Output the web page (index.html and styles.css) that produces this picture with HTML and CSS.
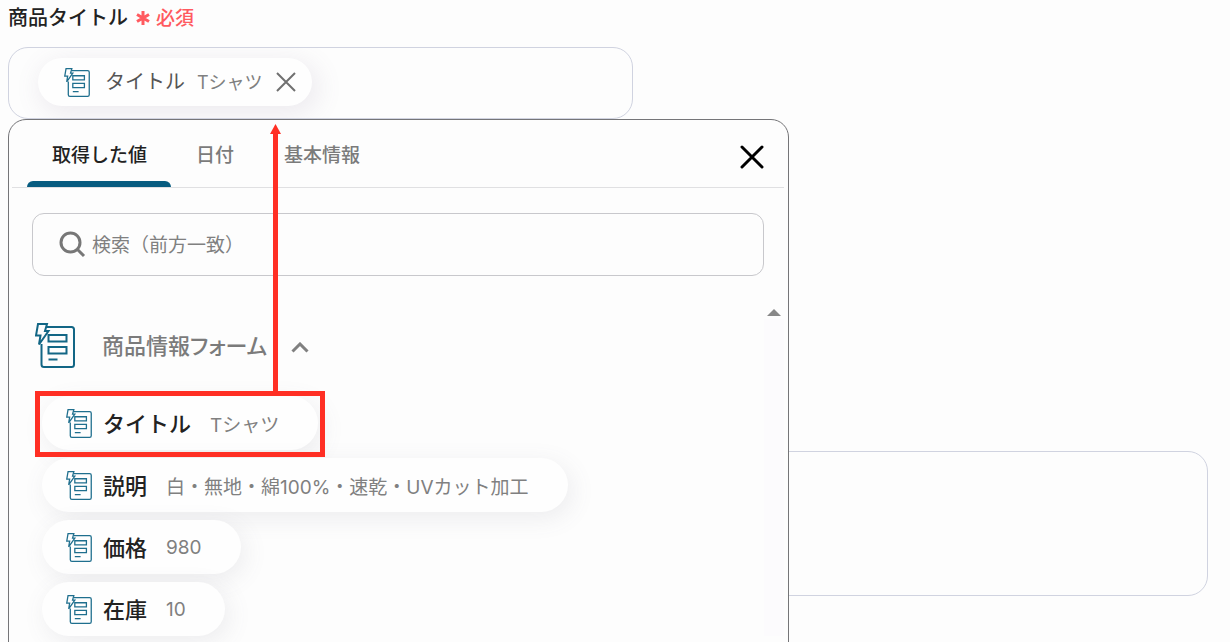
FILE: index.html
```html
<!DOCTYPE html>
<html lang="ja">
<head>
<meta charset="utf-8">
<meta name="viewport" content="width=device-width, initial-scale=1">
<title>商品タイトル</title>
<link rel="stylesheet" href="styles.css">
</head>
<body>
<svg class="defs" aria-hidden="true">
  <symbol id="form-icon" viewBox="0 0 40 45">
    <path d="M12 4H36.500Q39 4 39 6.500V41.500Q39 44 36.500 44H9Q6.500 44 6.500 41.500V21M13.500 12H31.500V18.500H13.500ZM13.500 24H31.500V30.500H13.500ZM13.500 36.500H22.500"/>
    <path d="M3 1H12L10 8H13.500L4 21.500L5.500 12.500H1Z"/>
  </symbol>
</svg>
<main class="page">
  <label class="label" for="title-field">商品タイトル <span class="required"><svg class="star" viewBox="0 0 14 14" aria-hidden="true"><path d="M7 0V14M1 3.500L13 10.500M1 10.500L13 3.500"/></svg>必須</span></label>
  <div class="field-area">
    <div class="field">
      <span class="token">
        <svg class="form-icon" aria-hidden="true"><use href="#form-icon"/></svg>
        <span class="token-name">タイトル</span>
        <span class="token-value">Tシャツ</span>
        <button class="token-remove" type="button" aria-label="削除"><svg viewBox="0 0 20 20"><path d="M1 1L19 19M19 1L1 19"/></svg></button>
      </span>
      <input class="field-input" id="title-field" type="text">
    </div>
    <section class="picker" aria-label="値の選択">
      <header class="picker-head">
        <nav class="tabs">
          <button class="tab tab-active" type="button">取得した値</button>
          <button class="tab" type="button">日付</button>
          <button class="tab" type="button">基本情報</button>
        </nav>
        <button class="close" type="button" aria-label="閉じる"><svg viewBox="0 0 24 24"><path d="M2 2L22 22M22 2L2 22"/></svg></button>
      </header>
      <div class="search">
        <svg class="search-icon" viewBox="0 0 27 27" aria-hidden="true"><circle cx="11.500" cy="11.500" r="9.500"/><path d="M18.500 18.500L25 25"/></svg>
        <input class="search-input" type="search" aria-label="検索" placeholder="検索（前方一致）">
      </div>
      <div class="results">
        <div class="results-main">
          <button class="group" type="button">
            <svg class="group-icon" aria-hidden="true"><use href="#form-icon"/></svg>
            <span>商品情報フォーム</span>
            <svg class="chevron" viewBox="0 0 18 11" aria-hidden="true"><path d="M1.500 9.500L9 2L16.500 9.500"/></svg>
          </button>
          <div class="chips">
            <button class="chip" type="button"><svg class="form-icon" aria-hidden="true"><use href="#form-icon"/></svg><span class="chip-name">タイトル</span><span class="chip-value">Tシャツ</span></button>
            <button class="chip" type="button"><svg class="form-icon" aria-hidden="true"><use href="#form-icon"/></svg><span class="chip-name">説明</span><span class="chip-value">白・無地・綿100%・速乾・UVカット加工</span></button>
            <button class="chip" type="button"><svg class="form-icon" aria-hidden="true"><use href="#form-icon"/></svg><span class="chip-name">価格</span><span class="chip-value">980</span></button>
            <button class="chip" type="button"><svg class="form-icon" aria-hidden="true"><use href="#form-icon"/></svg><span class="chip-name">在庫</span><span class="chip-value">10</span></button>
          </div>
        </div>
        <div class="scroll"><svg class="scroll-up" viewBox="0 0 14 7" aria-hidden="true"><path d="M0 7L7 0L14 7Z"/></svg></div>
      </div>
      <svg class="callout" viewBox="0 0 290 333" aria-hidden="true">
        <path class="callout-line" d="M240.500 8V270M2.500 269.500H287.500V330.500H2.500Z"/>
        <path class="callout-head" d="M240.500 0L246 10H235Z"/>
      </svg>
    </section>
  </div>
  <textarea class="description" aria-label="商品説明"></textarea>
</main>
</body>
</html>
```
FILE: styles.css
```css
* { box-sizing: border-box; }
body {
  margin: 0;
  height: 100vh;
  overflow: hidden;
  background: #fdfdfd;
  color: #222;
  font-family: Inter, "Noto Sans CJK JP", sans-serif;
}
button, input, textarea { font: inherit; color: inherit; border: 0; background: none; padding: 0; margin: 0; outline: 0; }
button { cursor: pointer; }
svg { display: block; fill: none; flex: none; }
.defs { position: absolute; width: 0; height: 0; }
.page { padding: 0 22px 0 8px; }
.label {
  display: flex;
  align-items: center;
  gap: 8px;
  height: 32px;
  margin-bottom: 15px;
  font-size: 20px;
  font-weight: 500;
}
.required { display: flex; align-items: center; gap: 6px; color: #ff5a5f; font-size: 19px; }
.star { width: 14px; height: 14px; margin-top: 4px; stroke: #ff5a5f; stroke-width: 3; }
.field-area { position: relative; margin-bottom: 332px; }
.field {
  display: flex;
  align-items: center;
  width: 52.1%;
  height: 72px;
  padding: 0 29px 2px;
  border: 1px solid #d0d3e0;
  border-radius: 20px;
  overflow: hidden;
}
.field-input { flex: 1; min-width: 0; }
.token {
  display: flex;
  align-items: center;
  height: 48px;
  padding: 0 16px 0 26px;
  border-radius: 24px;
  background: #fefefe;
  box-shadow: 4px 6px 24px 4px #78648c1c;
}
.form-icon { width: 26px; height: 29px; stroke: #1f6f8e; stroke-width: 2; }
.token-name { margin-left: 15px; padding-bottom: 3px; font-size: 20px; color: #555; }
.token-value { margin-left: 12px; padding-bottom: 3px; font-size: 18px; color: #808080; }
.token-remove { margin-left: 13px; }
.token-remove svg { width: 20px; height: 20px; stroke: #707070; stroke-width: 2; }
.picker {
  position: absolute;
  top: 72px;
  left: 0;
  width: 65.1%;
  padding: 0 4px 40px 3px;
  border: 1px solid #757578;
  border-radius: 18px;
  background: #fdfdfd;
}
.picker-head {
  display: flex;
  justify-content: space-between;
  align-items: center;
  height: 68px;
  padding: 0 20px 0 15px;
  border-bottom: 1px solid #e0e0e2;
}
.tabs { display: flex; align-self: stretch; }
.tab {
  position: relative;
  padding: 0 25px;
  color: #7b7b7b;
  font-size: 19px;
  font-weight: 500;
}
.tab-active { padding-right: 24px; color: #222; }
.tab-active::after {
  content: "";
  position: absolute;
  inset: auto 0 0;
  height: 6px;
  border-radius: 6px 6px 0 0;
  background: #075c80;
}
.close svg { width: 24px; height: 24px; margin-top: 6px; stroke: #000; stroke-width: 3; stroke-linecap: round; }
.search {
  display: flex;
  align-items: center;
  gap: 6px;
  height: 63px;
  margin: 25px 20px 0;
  padding: 0 26px;
  border: 1px solid #c8c8cc;
  border-radius: 12px;
}
.search-icon { width: 27px; height: 27px; stroke: #777; stroke-width: 3; }
.search-input { flex: 1; min-width: 0; padding-top: 2px; font-size: 19px; }
.search-input::placeholder { color: #808080; opacity: 1; }
.results { display: flex; margin-top: 33px; }
.results-main { flex: 1; min-width: 0; padding: 13px 0 0 23px; }
.group { display: flex; align-items: center; height: 46px; color: #7b7b7b; font-size: 22px; font-weight: 500; font-feature-settings: "palt"; }
.group span { padding-bottom: 3px; }
.group-icon { width: 40px; height: 45px; margin-right: 27px; stroke: #126685; stroke-width: 2; }
.chevron { width: 18px; height: 11px; margin-left: 24px; margin-top: 4px; stroke: #808080; stroke-width: 3; }
.chips { display: flex; flex-direction: column; align-items: flex-start; gap: 8px; margin: 28px 0 0 7px; }
.chip {
  display: flex;
  align-items: center;
  height: 54px;
  padding: 0 39px 0 24px;
  border-radius: 27px;
  background: #fefefe;
  box-shadow: 4px 6px 24px #6464781c;
  white-space: nowrap;
}
.chip-name { margin-left: 11px; padding-bottom: 3px; font-size: 22px; font-weight: 500; }
.chip-value { margin-left: 19px; font-size: 19px; color: #808080; }
.scroll { width: 20px; padding-left: 3px; background: linear-gradient(#fdfdfd 10px, #fcfbfd 10px); }
.scroll-up { width: 14px; height: 7px; fill: #888; }
.callout { position: absolute; top: 4px; left: 26px; width: 290px; height: 333px; pointer-events: none; }
.callout-line { stroke: #ff2f24; stroke-width: 5; }
.callout-head { fill: #ff2f24; }
.description {
  display: block;
  width: 100%;
  height: 145px;
  padding: 20px;
  border: 1px solid #d0d3e0;
  border-radius: 20px;
  resize: none;
}
```
